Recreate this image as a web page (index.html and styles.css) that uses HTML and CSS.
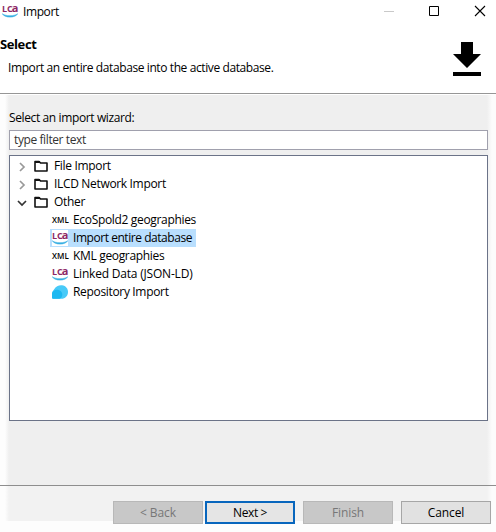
FILE: index.html
```html
<!DOCTYPE html>
<html lang="en">
<head>
<meta charset="utf-8">
<title>Import</title>
<link rel="stylesheet" href="styles.css">
</head>
<body>
<svg class="defs" width="0" height="0" aria-hidden="true">
  <symbol id="folder" viewBox="0 0 16 16"><path d="M2 3.5h4l1.5 1.5H14v8H2z" fill="none" stroke="#111" stroke-width="1.6" stroke-linejoin="round"/><path d="M2 3h4.6l1.4 2H2z" fill="#111"/></symbol>
  <symbol id="swoosh" viewBox="0 0 16 16"><path d="M.3 10.700C3.500 13.400 12.500 13.400 15.700 10.700C13.500 15.200 2.500 15.200 .3 10.700z" fill="#35aee2" stroke="#35aee2" stroke-width=".6"/></symbol>
</svg>
<div class="window">
  <header class="titlebar">
    <span class="lca"><b>LC<i>a</i></b><svg><use href="#swoosh"/></svg></span>
    <span class="title">Import</span>
    <svg class="controls" viewBox="0 0 112 24"><path d="M0 11.5h10" stroke="#c9c9c9"/><path d="M45.5 6.5h9v9h-9z" fill="none" stroke="#000"/><path d="M91 6l10 10M101 6l-10 10" stroke="#000" stroke-width="1.1"/></svg>
  </header>
  <section class="banner">
    <div class="copy"><h1>Select</h1><p>Import an entire database into the active database.</p></div>
    <svg class="download" viewBox="0 0 28 34"><path d="M8 0h12v12h8L14 26 0 12h8zM0 30h28v4H0z"/></svg>
  </section>
  <main class="content">
    <label class="caption" for="filter">Select an import wizard:</label>
    <div class="filter" id="filter">type filter text</div>
    <div class="tree">
      <div class="row"><svg class="arrow" viewBox="0 0 12 12"><path d="M4 2l4 4-4 4" stroke="#999"/></svg><svg class="icon"><use href="#folder"/></svg><span>File Import</span></div>
      <div class="row"><svg class="arrow" viewBox="0 0 12 12"><path d="M4 2l4 4-4 4" stroke="#999"/></svg><svg class="icon"><use href="#folder"/></svg><span>ILCD Network Import</span></div>
      <div class="row"><svg class="arrow" viewBox="0 0 12 12"><path d="M2 4l4 4 4-4" stroke="#333"/></svg><svg class="icon"><use href="#folder"/></svg><span>Other</span></div>
      <div class="row child"><span class="xml">XML</span><span>EcoSpold2 geographies</span></div>
      <div class="row child selected"><span class="lca"><b>LC<i>a</i></b><svg><use href="#swoosh"/></svg></span><span>Import entire database</span></div>
      <div class="row child"><span class="xml">XML</span><span>KML geographies</span></div>
      <div class="row child wide"><span class="lca"><b>LC<i>a</i></b><svg><use href="#swoosh"/></svg></span><span>Linked Data (JSON-LD)</span></div>
      <div class="row child"><svg class="icon" viewBox="0 0 16 16"><path d="M2 5.500C4 2 7 1 10 1.300C14 1.700 16 5 16 8C16 12 13 14.700 9.500 14.800H1.200Q0 14.800 0 13.500V10Q0 7.500 2 5.500z" fill="#48caf8"/><path d="M0 13.500V9.500C.5 7 3 5.500 5.500 5.800C9 6.200 10.500 9 10.300 11C10.100 13 9 14.300 7.500 14.800H1.200Q0 14.800 0 13.500z" fill="#1db8f1"/></svg><span>Repository Import</span></div>
    </div>
  </main>
  <footer class="actions">
    <button class="off" disabled>&lt; Back</button>
    <button class="default">Next &gt;</button>
    <button class="off finish" disabled>Finish</button>
    <button class="cancel">Cancel</button>
  </footer>
</div>
</body>
</html>
```
FILE: styles.css
```css
* { box-sizing: border-box; }
body { margin: 0; background: #fdfdfd; color: #000; font: 12px/18px "Open Sans", "Noto Sans", sans-serif; }
.defs { position: absolute; }
.window { width: 496px; height: 532px; display: flex; flex-direction: column; }
.titlebar { height: 24px; background: #fff; display: flex; align-items: flex-start; padding: 3px 0 0 2px; }
.title { margin-left: 5px; letter-spacing: -0.4px; }
.controls { width: 112px; height: 24px; margin: -3px 0 0 auto; }
.banner { height: 70px; background: #fff; border-bottom: 1px solid #969696; display: flex; justify-content: space-between; padding: 11px 15px 0 0; }
h1 { margin: 0; font-size: 13px; line-height: 18px; letter-spacing: -0.4px; }
.banner p { margin: 6px 0 0 8px; letter-spacing: -0.4px; white-space: nowrap; }
.download { width: 28px; height: 34px; margin-top: 7px; }
.content { height: 391px; border-top: 1px solid #fff; padding: 14px 8px 0 9px; background: linear-gradient(90deg, #fdfdfd 5px, #efefef 9px, #efefef 487px, #fcfcfc 492px); }
.caption { display: block; height: 21px; letter-spacing: -0.38px; }
.filter { height: 20px; border: 1px solid #a0a0ad; background: #fff; color: #333; padding: 0 4px; letter-spacing: -0.4px; }
.tree { height: 266px; margin-top: 5px; border: 1px solid #6b7388; background: #fff; padding-top: 1px; }
.row { display: flex; height: 18px; align-items: center; padding-left: 6px; white-space: nowrap; letter-spacing: -0.33px; }
.arrow { width: 12px; height: 12px; margin: 2px 5px 0 0; fill: none; stroke-width: 1.7; }
.icon { width: 16px; height: 16px; margin-right: 5px; flex: none; }
.child { margin-left: 40px; padding-left: 2px; width: 146px; }
.selected { background: #b9dffe; letter-spacing: -0.45px; }
.wide { letter-spacing: -0.2px; }
.lca { width: 16px; height: 16px; position: relative; background: #fff; flex: none; }
.lca b { position: absolute; left: 0; top: 0; font: bold 9px/12px "Open Sans", sans-serif; color: #8d2866; letter-spacing: 0; }
.lca i { font-style: normal; font-size: 11px; line-height: 10px; margin-left: -1px; }
.lca svg { position: absolute; left: 0; top: 0; width: 16px; height: 16px; }
.child .lca { margin-right: 5px; }
.xml { width: 16px; margin-right: 5px; font: 600 8px/16px "Open Sans", sans-serif; letter-spacing: 0.1px; }
.actions { height: 47px; border-top: 1px solid #8e8e8e; display: flex; padding: 15px 5px 0 113px; background: linear-gradient(#fdfdfd, #fdfdfd) 0 35px / 100% 12px no-repeat, linear-gradient(90deg, #fdfdfd 5px, #f2f2f2 9px, #f2f2f2 487px, #fcfcfc 492px); }
button { width: 90px; height: 23px; padding: 0; margin: 0; font: inherit; line-height: 20px; letter-spacing: -0.1px; color: #000; background: #e1e1e1; border: 1px solid #a6a6a6; border-radius: 0; }
.off { background: #c8c8c8; border-color: #b8b8b8; color: #777; }
.default { margin-left: 2px; border: 2px solid #0866bd; background: #e5e5e5; line-height: 18px; letter-spacing: -0.4px; }
.finish, .cancel { margin-left: 8px; }
```
